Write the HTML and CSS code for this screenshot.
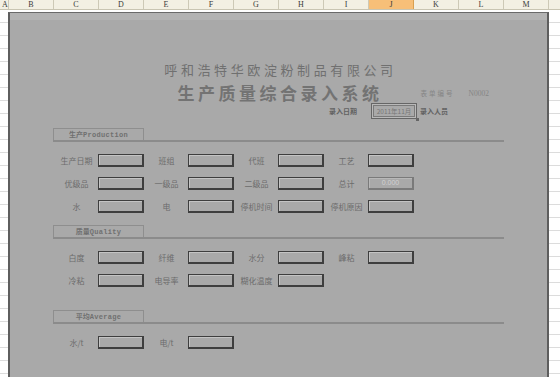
FILE: index.html
```html
<!DOCTYPE html>
<html lang="zh-CN">
<head>
  <meta charset="UTF-8" />
  <meta name="viewport" content="width=device-width, initial-scale=1.0"/>
  <title>生产质量综合录入系统</title>
  <link rel="stylesheet" href="styles.css">
</head>
<body>
  <div class="col-head">
    <div class="col narrow">A</div>
    <div class="col">B</div>
    <div class="col">C</div>
    <div class="col">D</div>
    <div class="col">E</div>
    <div class="col">F</div>
    <div class="col">G</div>
    <div class="col">H</div>
    <div class="col">I</div>
    <div class="col active">J</div>
    <div class="col">K</div>
    <div class="col">L</div>
    <div class="col">M</div>
    <div class="col rest"></div>
  </div>

  <div class="sheet">
    <div class="panel">
      <div class="band"></div>

      <h1 class="company">呼和浩特华欧淀粉制品有限公司</h1>

      <div class="title-row">
        <span></span>
        <h2 class="title">生产质量综合录入系统</h2>
        <div class="form-no">
          <span class="form-no-label">表单编号</span>
          <span class="form-no-value">N0002</span>
        </div>
      </div>

      <div class="date-row">
        <span class="date-label">录入日期</span>
        <span class="date-box">2011年11月</span>
        <span class="date-label after">录入人员</span>
      </div>

      <div class="content">
        <div class="section first">
          <div class="tab">生产<span class="en">Production</span></div>
        </div>
        <div class="grid">
          <span class="label">生产日期</span><span class="box"></span>
          <span class="label">班组</span><span class="box"></span>
          <span class="label">代班</span><span class="box"></span>
          <span class="label">工艺</span><span class="box"></span>

          <span class="label">优级品</span><span class="box"></span>
          <span class="label">一级品</span><span class="box"></span>
          <span class="label">二级品</span><span class="box"></span>
          <span class="label">总计</span><span class="box readonly">0.000</span>

          <span class="label">水</span><span class="box"></span>
          <span class="label">电</span><span class="box"></span>
          <span class="label">停机时间</span><span class="box"></span>
          <span class="label">停机原因</span><span class="box"></span>
        </div>

        <div class="section">
          <div class="tab">质量<span class="en">Quality</span></div>
        </div>
        <div class="grid">
          <span class="label">白度</span><span class="box"></span>
          <span class="label">纤维</span><span class="box"></span>
          <span class="label">水分</span><span class="box"></span>
          <span class="label">峰粘</span><span class="box"></span>

          <span class="label">冷粘</span><span class="box"></span>
          <span class="label">电导率</span><span class="box"></span>
          <span class="label">糊化温度</span><span class="box"></span>
        </div>

        <div class="section last">
          <div class="tab">平均<span class="en">Average</span></div>
        </div>
        <div class="grid">
          <span class="label">水/t</span><span class="box"></span>
          <span class="label">电/t</span><span class="box"></span>
        </div>
      </div>
    </div>
  </div>
</body>
</html>
```

FILE: styles.css
```css
body {
  margin: 0;
  width: 560px;
  height: 380px;
  overflow: hidden;
  background: #fff;
  font-family: "Noto Sans CJK SC", "Noto Sans", sans-serif;
}

/* excel column header */
.col-head {
  display: flex;
  height: 10px;
  overflow: hidden;
  box-sizing: border-box;
  background: #f3f0e3;
  border-bottom: 1px solid #c9c5b2;
}
.col {
  flex: 0 0 45px;
  box-sizing: border-box;
  border-right: 1px solid #cdc9b6;
  font-family: "Liberation Serif", serif;
  font-size: 8px;
  line-height: 9px;
  text-align: center;
  color: #3a3a3a;
}
.col.narrow {
  flex-basis: 9px;
  text-align: left;
  padding-left: 2px;
}
.col.rest {
  flex: 1 1 0;
  border-right: none;
}
.col.active {
  background: #f7bf78;
  border-color: #d9a050;
}

.sheet {
  height: 370px;
  box-sizing: border-box;
  padding: 2px 0 0 8px;
  background: repeating-linear-gradient(to bottom, #fff 0 12px, #dcdcdc 12px 13px);
}

.panel {
  width: 541px;
  height: 365px;
  box-sizing: border-box;
  background: #a9a9a9;
  border: 2px solid #5e5e5e;
  border-top: 1px solid #6a6a6a;
  border-bottom: none;
  color: #6e6e6e;
}
.band {
  height: 7px;
  background: #b3b3b3;
}

.company {
  margin: 42px 0 0;
  padding-left: 4px;
  font-size: 13px;
  font-weight: normal;
  line-height: 16px;
  letter-spacing: 3.6px;
  text-align: center;
  color: #707070;
}

.title-row {
  display: grid;
  grid-template-columns: 1fr auto 1fr;
  align-items: center;
  height: 20px;
  margin-top: 5px;
}
.title {
  margin: 0;
  padding-left: 3px;
  font-size: 17px;
  font-weight: bold;
  line-height: 20px;
  letter-spacing: 3.5px;
  color: #737373;
}
.form-no {
  padding-left: 38px;
  display: flex;
  align-items: center;
  color: #858585;
}
.form-no-label {
  font-size: 6.5px;
  letter-spacing: 2px;
}
.form-no-value {
  margin-left: 14px;
  font-family: "Liberation Serif", serif;
  font-size: 7.5px;
}

.date-row {
  display: flex;
  align-items: center;
  height: 16px;
  padding-left: 319px;
}
.date-label {
  font-size: 7px;
  font-weight: bold;
  color: #626262;
}
.date-label.after {
  margin-left: 3px;
}
.date-box {
  position: relative;
  width: 46px;
  height: 16px;
  margin-left: 14px;
  box-sizing: border-box;
  border: 1px solid #666;
  box-shadow: inset 0 0 0 1px #b9b9b9, inset 0 0 0 2px #7a7a7a;
  font-size: 6.5px;
  line-height: 14px;
  text-align: center;
  color: #777;
}
.date-box::after {
  content: "";
  position: absolute;
  right: -3px;
  bottom: -3px;
  width: 3px;
  height: 3px;
  background: #666;
}

.content {
  padding-left: 44px;
}

.section {
  width: 451px;
  height: 14px;
  margin: 9px 0 0 -1px;
  box-sizing: border-box;
  border-bottom: 2px solid #8b8b8b;
}
.section + .grid {
  margin-top: 7px;
}
.grid + .section {
  margin-top: 7px;
}
.grid + .section.last {
  margin-top: 18px;
}
.tab {
  width: 91px;
  height: 12px;
  box-sizing: border-box;
  border: 1px solid #8e8e8e;
  border-bottom: none;
  font-size: 7px;
  font-weight: bold;
  line-height: 11px;
  text-align: center;
  color: #707070;
}
.tab .en {
  font-family: "Liberation Mono", monospace;
  letter-spacing: 0.3px;
}

.grid {
  display: grid;
  grid-template-columns: repeat(8, 45px);
  grid-auto-rows: 23px;
  align-items: center;
}
.label {
  font-size: 8px;
  line-height: 10px;
  text-align: center;
  color: #6c6c6c;
}
.box {
  width: 46px;
  height: 13px;
  margin-left: -1px;
  box-sizing: border-box;
  border: 1px solid #3e3e3e;
  border-right-width: 2px;
  border-bottom-width: 2px;
  box-shadow: inset 1px 1px 0 #c4c4c4;
}
.box.readonly {
  border-color: #7a7a7a;
  box-shadow: inset 1px 1px 0 #b8b8b8;
  font-family: "Liberation Sans", sans-serif;
  font-size: 7px;
  line-height: 10px;
  text-align: center;
  color: #d2d2d2;
}
```
